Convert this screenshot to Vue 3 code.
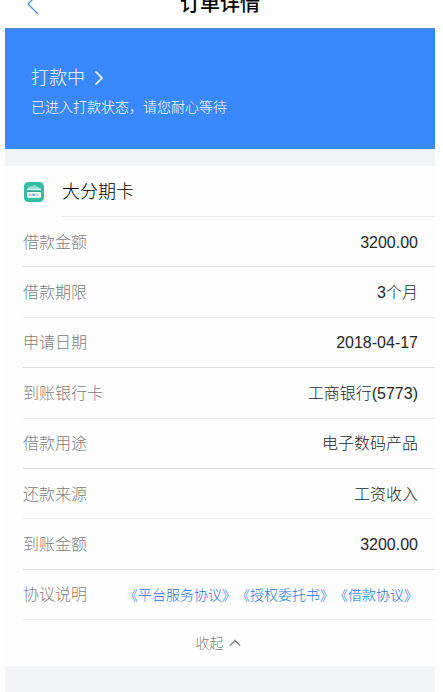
<script setup>
import { ref } from 'vue'

const expanded = ref(true)

const rows = [
  { label: '借款金额', value: '3200.00' },
  { label: '借款期限', value: '3个月' },
  { label: '申请日期', value: '2018-04-17' },
  { label: '到账银行卡', value: '工商银行(5773)' },
  { label: '借款用途', value: '电子数码产品' },
  { label: '还款来源', value: '工资收入' },
  { label: '到账金额', value: '3200.00' },
]

const agreements = ['《平台服务协议》', '《授权委托书》', '《借款协议》']
</script>

<template>
  <div class="page">
    <header class="topbar">
      <div class="topbar-inner">
        <button class="back" type="button" aria-label="返回">
          <svg width="12" height="22" viewBox="0 0 12 22" fill="none" stroke="#3c86d8" stroke-width="1.2">
            <path d="M11 1 1 11l10 10" />
          </svg>
        </button>
        <h1 class="title">订单详情</h1>
      </div>
    </header>

    <main class="content">
      <section class="status">
        <button class="status-title" type="button">
          <span>打款中</span>
          <svg width="10" height="16" viewBox="0 0 10 16" fill="none" stroke="#fff" stroke-width="1.7">
            <path d="M1.5 1.5 8 8l-6.500 6.500" />
          </svg>
        </button>
        <p class="status-text">已进入打款状态，请您耐心等待</p>
      </section>

      <section class="card">
        <div class="card-head">
          <svg class="logo" width="20" height="20" viewBox="0 0 20 20">
            <rect width="20" height="20" rx="4.500" fill="#35bda4" />
            <path d="M3.500 7.500 4 5.200 10.500 3.200 15 5.400 16.500 7.500z" fill="#8fe0d0" />
            <path d="M3 6.500h14v2H3z" fill="#c9f3ea" />
            <path d="M3 8.500h14v1.500H3z" fill="#2aa58f" />
            <rect x="3" y="10" width="14" height="5.800" rx="1" fill="#f4fffd" />
            <path d="M5 11.700h2.500v2.200H5z" fill="#f0a9a0" />
            <path d="M8.300 11.700h3v2.200h-3z" fill="#7d9fdc" />
            <path d="M12.200 11.700h2.500v2.200h-2.500z" fill="#a5d4e6" />
          </svg>
          <h2 class="card-title">大分期卡</h2>
        </div>

        <dl v-show="expanded" class="rows">
          <div v-for="row in rows" :key="row.label" class="row">
            <dt>{{ row.label }}</dt>
            <dd>{{ row.value }}</dd>
          </div>
          <div class="row">
            <dt>协议说明</dt>
            <dd class="links">
              <a v-for="name in agreements" :key="name" href="#">{{ name }}</a>
            </dd>
          </div>
        </dl>

        <button class="toggle" type="button" :aria-expanded="expanded" @click="expanded = !expanded">
          <span>{{ expanded ? '收起' : '展开' }}</span>
          <svg :class="{ flipped: !expanded }" width="12" height="8" viewBox="0 0 12 8" fill="none" stroke="#808080" stroke-width="1.300">
            <path d="M1 6.500 6 1.500l5 5" />
          </svg>
        </button>
      </section>
    </main>
  </div>
</template>

<style>
body {
  background: #fff;
}
</style>

<style scoped>
.page {
  display: flex;
  flex-direction: column;
  box-sizing: border-box;
  min-height: 100vh;
  padding: 0 8px 0 5px;
  background: #fff;
  font-family: "Liberation Sans", "Noto Sans CJK SC", sans-serif;
  font-size: 16px;
  line-height: 24px;
  font-weight: 300;
}

button {
  padding: 0;
  border: 0;
  background: none;
  font: inherit;
  color: inherit;
  cursor: pointer;
}

h1,
h2,
p,
dl,
dd {
  margin: 0;
}

svg {
  display: block;
  flex: none;
}

.topbar {
  overflow: hidden;
}

.topbar-inner {
  display: grid;
  grid-template-columns: 1fr auto 1fr;
  align-items: center;
  height: 48px;
  margin-top: -20px;
  padding: 0 22px;
}

.back {
  justify-self: start;
}

.title {
  font-size: 20px;
  line-height: 28px;
  font-weight: 500;
  color: #000;
}

.content {
  flex: 1;
  display: flex;
  flex-direction: column;
  background: #f3f4f6;
}

.status {
  padding: 35px 26px 32px;
  border-top: 1px solid #4a86cc;
  background: #3988ff;
  color: #fff;
}

.status-title {
  display: flex;
  align-items: center;
  gap: 9px;
  font-size: 18px;
  line-height: 28px;
}

.status-text {
  padding-top: 5px;
  font-size: 14px;
  line-height: 20px;
}

.card {
  border-top: 17px solid #f0f4f5;
  background: #fdfdfd;
}

.card-head {
  display: flex;
  align-items: center;
  gap: 18px;
  padding-left: 19px;
}

.card-title {
  flex: 1;
  padding-top: 2px;
  border-bottom: 1px solid #ebebeb;
  font-size: 18px;
  line-height: 48px;
  font-weight: 300;
  color: #000;
}

.rows {
  display: grid;
  grid-auto-rows: 1fr;
  min-height: 403px;
  padding-left: 18px;
}

.row {
  display: flex;
  align-items: center;
  justify-content: space-between;
  padding: 2px 17px 0 0;
  border-bottom: 1px solid #e2e2e2;
}

.row:nth-child(even) {
  border-bottom-color: #f0f0f0;
}

dt {
  color: #808080;
}

dd {
  color: #262626;
}

.links {
  display: flex;
  font-size: 14px;
}

.links a {
  color: #1f74dc;
  text-decoration: none;
}

.toggle {
  display: flex;
  align-items: center;
  justify-content: center;
  gap: 5px;
  width: 100%;
  height: 46px;
  padding-right: 4px;
  font-size: 14px;
  color: #808080;
}

.flipped {
  transform: rotate(180deg);
}
</style>
